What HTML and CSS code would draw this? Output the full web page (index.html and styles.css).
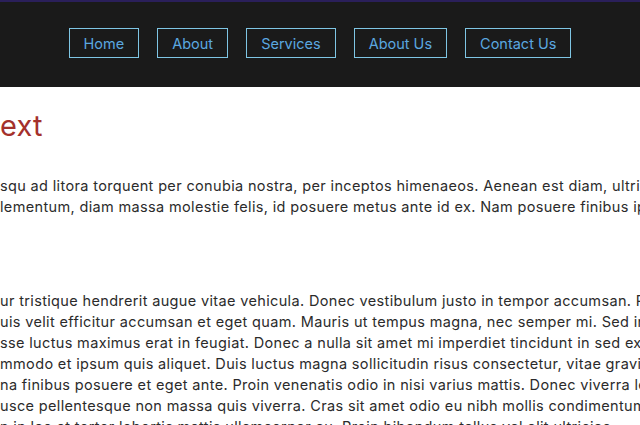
FILE: index.html
```html
<!DOCTYPE html>
<html lang="en">
<head>
<meta charset="utf-8">
<title>Page</title>
<link rel="stylesheet" href="styles.css">
</head>
<body>
<header class="site-header">
  <nav class="nav">
    <a class="nav-link" href="#">Home</a>
    <a class="nav-link" href="#">About</a>
    <a class="nav-link" href="#">Services</a>
    <a class="nav-link" href="#">About Us</a>
    <a class="nav-link" href="#">Contact Us</a>
  </nav>
</header>
<main class="content">
  <h1 class="title">ext</h1>
  <p class="para">
    <span class="line">squ ad litora torquent per conubia nostra, per inceptos himenaeos. Aenean est diam, ultricies</span>
    <span class="line">lementum, diam massa molestie felis, id posuere metus ante id ex. Nam posuere finibus ipsum</span>
  </p>
  <p class="para para-second">
    <span class="line">ur tristique hendrerit augue vitae vehicula. Donec vestibulum justo in tempor accumsan. Proin</span>
    <span class="line">uis velit efficitur accumsan et eget quam. Mauris ut tempus magna, nec semper mi. Sed interdum</span>
    <span class="line">sse luctus maximus erat in feugiat. Donec a nulla sit amet mi imperdiet tincidunt in sed ex. Nulla</span>
    <span class="line">mmodo et ipsum quis aliquet. Duis luctus magna sollicitudin risus consectetur, vitae gravida</span>
    <span class="line">na finibus posuere et eget ante. Proin venenatis odio in nisi varius mattis. Donec viverra lectus</span>
    <span class="line">usce pellentesque non massa quis viverra. Cras sit amet odio eu nibh mollis condimentum in</span>
    <span class="line">n in leo at tortor lobortis mattis ullamcorper eu. Proin bibendum tellus vel elit ultricies</span>
  </p>
</main>
</body>
</html>
```
FILE: styles.css
```css
html, body {
  margin: 0;
  padding: 0;
  background: #ffffff;
  overflow: hidden;
}
body {
  font-family: "Inter", "Open Sans", sans-serif;
  color: #2b2b2b;
}
.site-header {
  background: #1a1a1a;
  border-top: 2px solid #2a1f5a;
  height: 85px;
  display: flex;
  align-items: center;
  justify-content: center;
}
.nav {
  display: flex;
  gap: 18px;
  margin-top: -3px;
}
.nav-link {
  display: block;
  border: 1px solid #7fc6e4;
  color: #5ba8e0;
  text-decoration: none;
  font-size: 14.5px;
  padding: 0 14px;
  height: 28px;
  line-height: 29px;
}
.content {
  padding: 0;
}
.title {
  margin: 19px 0 0 0;
  font-size: 29px;
  font-weight: 400;
  color: #a4302c;
  line-height: 40px;
  letter-spacing: 0.2px;
}
.para {
  margin: 29px 0 0 0;
  font-size: 14.5px;
  line-height: 21px;
  white-space: nowrap;
  letter-spacing: 0.35px;
}
.para-second {
  margin-top: 73px;
}
.line {
  display: block;
}
```
